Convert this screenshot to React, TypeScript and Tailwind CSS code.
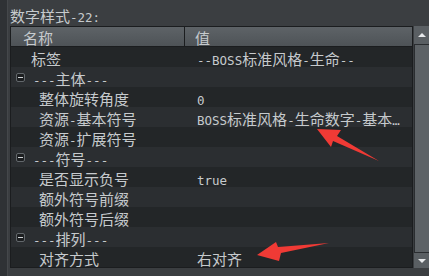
import React from "react";

type Row =
  | { kind: "group"; label: string }
  | { kind: "item"; label: string; value?: string; indent?: boolean };

const rows: Row[] = [
  { kind: "item", label: "标签", value: "--BOSS标准风格-生命--", indent: false },
  { kind: "group", label: "---主体---" },
  { kind: "item", label: "整体旋转角度", value: "0", indent: true },
  { kind: "item", label: "资源-基本符号", value: "BOSS标准风格-生命数字-基本…", indent: true },
  { kind: "item", label: "资源-扩展符号", indent: true },
  { kind: "group", label: "---符号---" },
  { kind: "item", label: "是否显示负号", value: "true", indent: true },
  { kind: "item", label: "额外符号前缀", indent: true },
  { kind: "item", label: "额外符号后缀", indent: true },
  { kind: "group", label: "---排列---" },
  { kind: "item", label: "对齐方式", value: "右对齐", indent: true },
];

// latin runs in a narrow mono face, CJK runs full width, like the editor's font
function Txt({ s }: { s: string }) {
  const parts = s.match(/[\u3000-\u9fff\uff00-\uffef]+|[^\u3000-\u9fff\uff00-\uffef]+/g) || [];
  return (
    <span className="inline-flex items-baseline whitespace-nowrap leading-[16px]">
      {parts.map((p, i) =>
        /[\u3000-\u9fff]/.test(p) ? (
          <span key={i} className="text-[15px] leading-[16px]" style={{ fontFamily: '"Noto Sans CJK SC", sans-serif' }}>
            {p}
          </span>
        ) : (
          <span key={i} className="text-[12.5px] leading-[16px]" style={{ fontFamily: '"DejaVu Sans Mono", monospace' }}>
            {p}
          </span>
        )
      )}
    </span>
  );
}

function MinusBox() {
  return (
    <span className="flex h-[9px] w-[9px] items-center justify-center rounded-[2px] border border-[#63686c] bg-[#1c1e20]">
      <span className="h-px w-[5px] bg-[#d0d4d7]" />
    </span>
  );
}

export default function App() {
  return (
    <div className="relative flex h-[276px] w-[429px] overflow-hidden bg-[#3b3e41] text-[#c6cacd]">
      <div className="w-[8px] border-r border-[#45484b] bg-[#2f3235]" />
      <div className="flex flex-1 flex-col pl-[2px]">
        <div className="flex h-[26px] items-center pt-[8px]">
          <Txt s="数字样式-22:" />
        </div>
        <div className="flex">
          <div className="w-[403px] border border-[#1b1d1f]">
            <div className="flex h-[20px] border-b border-[#1b1d1f] bg-gradient-to-b from-[#5e6367] to-[#4e5357]">
              <div className="flex w-[174px] items-center border-r border-[#1b1d1f] pl-[12px] pt-[2px]">
                <Txt s="名称" />
              </div>
              <div className="flex flex-1 items-center pl-[10px] pt-[2px]">
                <Txt s="值" />
              </div>
            </div>
            {rows.map((r, i) => (
              <div
                key={i}
                className={`flex h-[20px] items-center pt-[3px] ${i % 2 === 0 ? "bg-[#232628]" : "bg-[#2b2e31]"}`}
              >
                {r.kind === "group" ? (
                  <div className="flex items-center pl-[5px]">
                    <span className="-mt-[2px]">
                      <MinusBox />
                    </span>
                    <span className="ml-[8px]">
                      <Txt s={r.label} />
                    </span>
                  </div>
                ) : (
                  <>
                    <div className={`w-[175px] ${r.indent ? "pl-[28px]" : "pl-[20px]"}`}>
                      <Txt s={r.label} />
                    </div>
                    <div className="flex-1 pl-[11px]">{r.value && <Txt s={r.value} />}</div>
                  </>
                )}
              </div>
            ))}
          </div>
          <div className="ml-px flex w-[15px] flex-col">
            <div className="flex h-[19px] items-center justify-center border-b border-[#2a2d30] bg-[#5a5f63]">
              <span className="h-0 w-0 border-x-[4px] border-b-[4px] border-x-transparent border-b-[#e6e8ea]" />
            </div>
            <div className="flex-1 border-l border-[#2a2d30] bg-[#5d6266]" />
            <div className="flex h-[16px] items-center justify-center border-t border-[#2a2d30] bg-[#5a5f63]">
              <span className="h-0 w-0 border-x-[4px] border-t-[4px] border-x-transparent border-t-[#e6e8ea]" />
            </div>
          </div>
        </div>
      </div>
      <svg className="pointer-events-none absolute inset-0" width="429" height="276">
        <polygon fill="#f03a35" points="317,129 341,130 337,136 379,161 333,141 331,147" />
        <polygon fill="#f03a35" points="257,255 276,242 278,247 329,243 281,253 279,261" />
      </svg>
    </div>
  );
}
